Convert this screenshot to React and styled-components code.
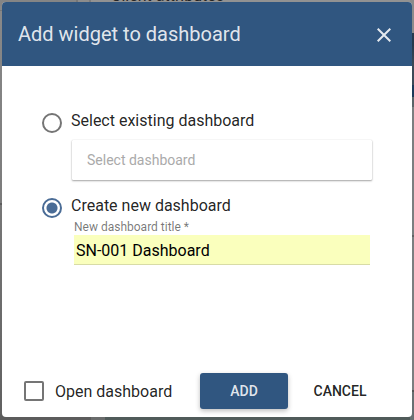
import React, { useState } from "react";
import styled, { createGlobalStyle } from "styled-components";

const GlobalStyle = createGlobalStyle`
  * { box-sizing: border-box; }
  body {
    margin: 0;
    font-family: Roboto, "Liberation Sans", sans-serif;
    font-size: 16px;
    color: rgba(0, 0, 0, 0.87);
  }
  button, input { font-family: inherit; }
`;

const Backdrop = styled.div`
  position: relative;
  display: flex;
  min-height: 100vh;
  padding: 2px 2px 3px;
  overflow: hidden;
  background:
    linear-gradient(#8b8b8b 33px, #263a4e 33px 45px, #3d4a58 65px 85px, #1d3a5a 85px 97px, #5b6468 97px 107px, #7c7f80 107px 235px, #606263 235px 237px, #7c7f80 237px 390px, #555 390px 392px, #687072 392px) right / 4px 100% no-repeat,
    linear-gradient(90deg, #5c5c5c 91px, #6a6c6c 91px 105px, #505b5a 105px) bottom / 100% 6px no-repeat,
    linear-gradient(90deg, #858585 76px, #777 76px 78px, #8c8c8c 78px 89px, #7c7c7c 89px 91px, #929292 91px) top / 100% 6px no-repeat,
    linear-gradient(#888 10px, #777 10px 11px, #888 11px 20px, #7c7c7c 203px, #5c5c5c 203px 205px, #777 205px, #606060);
`;

const PageHeading = styled.span`
  position: absolute;
  top: -14px;
  left: 111px;
  font-size: 16px;
  line-height: 20px;
  color: #252525;
`;

const Dialog = styled.form`
  position: relative;
  display: flex;
  flex: 1;
  flex-direction: column;
  border-radius: 4px;
  overflow: hidden;
  background: #fff;
`;

const Header = styled.header`
  display: flex;
  align-items: center;
  justify-content: space-between;
  height: 64px;
  padding: 0 8px 0 16px;
  background: #305680;
  color: rgba(255, 255, 255, 0.87);
`;

const Title = styled.h2`
  margin: 0;
  font-size: 20px;
  font-weight: 400;
  line-height: 24px;
`;

const CloseButton = styled.button`
  display: grid;
  place-items: center;
  width: 40px;
  height: 40px;
  padding: 2px 0 0;
  border: 0;
  background: none;
  color: inherit;
  cursor: pointer;
`;

const Body = styled.div`
  display: flex;
  flex: 1;
  flex-direction: column;
  padding: 44px 40px 0;
`;

const Option = styled.label`
  display: flex;
  gap: 9px;
  height: 24px;
  line-height: 22px;
  cursor: pointer;
`;

const Radio = styled.input`
  appearance: none;
  flex: none;
  width: 20px;
  height: 20px;
  margin: 3px 0 0;
  border: 2px solid #757575;
  border-radius: 50%;

  &:checked {
    border-color: #4a6c96;
    background: radial-gradient(circle, #4a6c96 5px, transparent 6px);
  }
`;

const SelectBox = styled.input`
  height: 40px;
  margin: 6px 0 15px 30px;
  padding: 0 15px;
  border: 0;
  border-radius: 1px;
  background: #fff;
  box-shadow: 0 1px 2px rgba(0, 0, 0, 0.35), 0 0 1px rgba(0, 0, 0, 0.2);
  font-size: 14px;

  &::placeholder { color: #aaa; opacity: 1; }
`;

const Field = styled.div`
  display: flex;
  flex-direction: column;
  margin: 0 2px 0 32px;
`;

const FieldLabel = styled.label`
  font-size: 12px;
  line-height: 16px;
  color: rgba(0, 0, 0, 0.54);
`;

const TextInput = styled.input`
  height: 30px;
  padding: 2px 2px 0;
  border: 0;
  border-bottom: 1px solid #d8dca6;
  border-radius: 0;
  background: #faffbd;
  color: #000;
  font-size: 16px;
`;

const Footer = styled.footer`
  display: flex;
  align-items: center;
  gap: 8px;
  padding: 0 28px 8px 22px;
`;

const CheckOption = styled.label`
  display: flex;
  align-items: center;
  gap: 11px;
  margin-right: auto;
  cursor: pointer;
`;

const Checkbox = styled.input`
  appearance: none;
  width: 20px;
  height: 20px;
  margin: 0;
  border: 2px solid #757575;
  border-radius: 2px;

  &:checked { background: #305680; border-color: #305680; }
`;

const Action = styled.button`
  min-width: 88px;
  height: 36px;
  padding: 0 16px;
  border: 0;
  border-radius: 3px;
  background: ${(p) => (p.$primary ? "#305680" : "transparent")};
  color: ${(p) => (p.$primary ? "rgba(255, 255, 255, 0.87)" : "rgba(0, 0, 0, 0.87)")};
  box-shadow: ${(p) => (p.$primary ? "0 2px 5px rgba(0, 0, 0, 0.26)" : "none")};
  font-size: 14px;
  font-weight: 500;
  text-transform: uppercase;
  cursor: pointer;
`;

export default function App() {
  const [mode, setMode] = useState("new");
  const [title, setTitle] = useState("SN-001 Dashboard");
  return (
    <>
      <GlobalStyle />
      <Backdrop>
        <PageHeading>Client attributes</PageHeading>
        <Dialog role="dialog" aria-labelledby="dialog-title" onSubmit={(e) => e.preventDefault()}>
          <Header>
            <Title id="dialog-title">Add widget to dashboard</Title>
            <CloseButton type="button" aria-label="Close">
              <svg width="14" height="14" viewBox="0 0 14 14" fill="none" stroke="currentColor" strokeWidth="2">
                <path d="M.7 .7 13.3 13.3M13.3 .7 .7 13.3" />
              </svg>
            </CloseButton>
          </Header>
          <Body>
            <Option>
              <Radio type="radio" name="mode" checked={mode === "existing"} onChange={() => setMode("existing")} />
              Select existing dashboard
            </Option>
            <SelectBox
              type="text"
              aria-label="Select dashboard"
              placeholder="Select dashboard"
              disabled={mode !== "existing"}
            />
            <Option>
              <Radio type="radio" name="mode" checked={mode === "new"} onChange={() => setMode("new")} />
              Create new dashboard
            </Option>
            <Field>
              <FieldLabel htmlFor="new-title">New dashboard title *</FieldLabel>
              <TextInput id="new-title" required value={title} onChange={(e) => setTitle(e.target.value)} />
            </Field>
          </Body>
          <Footer>
            <CheckOption>
              <Checkbox type="checkbox" />
              Open dashboard
            </CheckOption>
            <Action type="submit" $primary>Add</Action>
            <Action type="button">Cancel</Action>
          </Footer>
        </Dialog>
      </Backdrop>
    </>
  );
}
